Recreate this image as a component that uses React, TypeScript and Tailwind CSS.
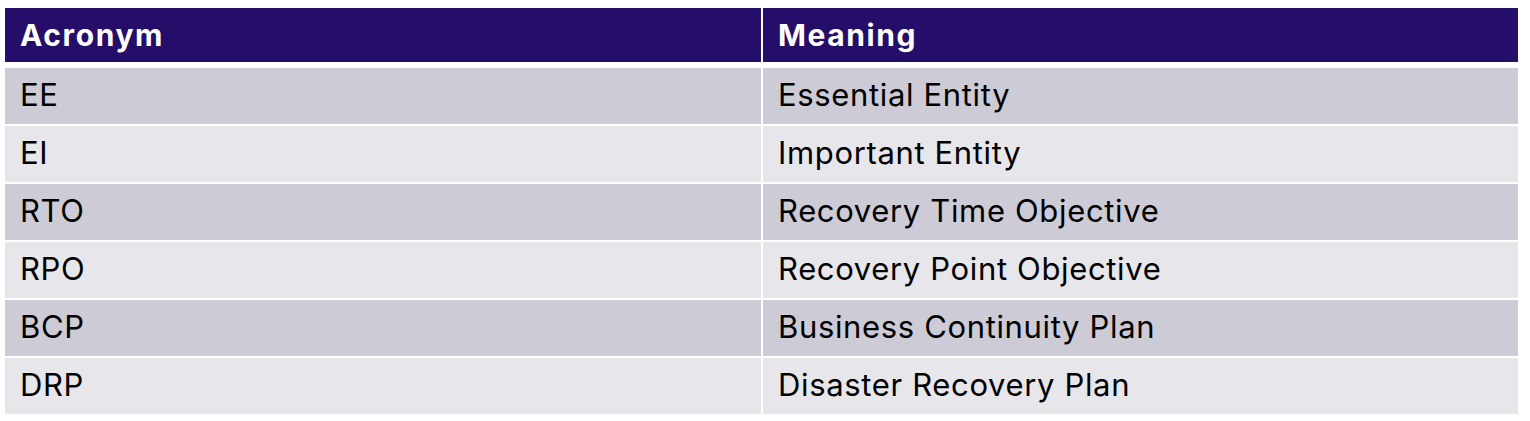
const ROWS: [string, string][] = [
  ['EE', 'Essential Entity'],
  ['EI', 'Important Entity'],
  ['RTO', 'Recovery Time Objective'],
  ['RPO', 'Recovery Point Objective'],
  ['BCP', 'Business Continuity Plan'],
  ['DRP', 'Disaster Recovery Plan'],
]

export default function App() {
  return (
    <div className="w-[1530px] h-[421px] bg-white pt-[8px] pl-[5px]" style={{ fontFamily: 'Inter, "Liberation Sans", sans-serif' }}>
      <div className="w-[1513px] flex flex-col">
        {/* header */}
        <div className="grid grid-cols-[756px_755px] gap-x-[2px] h-[54px] mb-[6px]">
          <div className="bg-[#250e69] text-white font-bold text-[30px] tracking-[1.6px] flex items-center pl-[15px]">Acronym</div>
          <div className="bg-[#250e69] text-white font-bold text-[30px] tracking-[1.6px] flex items-center pl-[15px]">Meaning</div>
        </div>

        {/* body */}
        <div className="flex flex-col gap-y-[2px]">
          {ROWS.map(([a, m], i) => {
            const bg = i % 2 === 0 ? 'bg-[#cdccd6]' : 'bg-[#e7e6eb]'
            return (
              <div key={a} className="grid grid-cols-[756px_755px] gap-x-[2px] h-[56px]">
                <div className={`${bg} text-black text-[31px] tracking-[0.65px] flex items-center pl-[15px] pb-[2px]`}>{a}</div>
                <div className={`${bg} text-black text-[31px] tracking-[0.65px] flex items-center pl-[15px] pb-[2px]`}>{m}</div>
              </div>
            )
          })}
        </div>
      </div>
    </div>
  )
}
